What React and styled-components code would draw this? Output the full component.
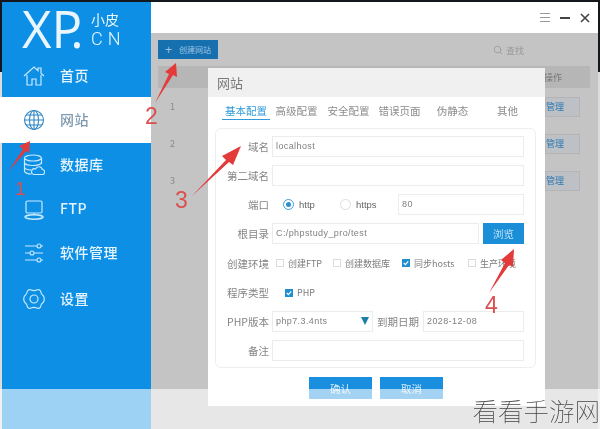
import React from 'react';
import styled, { createGlobalStyle } from 'styled-components';
import { Search } from 'lucide-react';

const GlobalStyle = createGlobalStyle`
  html, body {
    margin: 0;
    padding: 0;
    background: #ddd;
  }
  * {
    box-sizing: border-box;
  }
`;

const Page = styled.div`
  position: relative;
  width: 600px;
  height: 429px;
  overflow: hidden;
  padding: 2px 2px 0;
  background: linear-gradient(#14171c 72px, #dcdcdc 72px);
  font-family: "Noto Sans CJK SC", "Liberation Sans", sans-serif;
  font-size: 12px;
  color: #777;
`;

const Window = styled.div`
  display: flex;
  height: 427px;
  filter: blur(0.4px);
`;

const Sidebar = styled.aside`
  width: 149px;
  flex-shrink: 0;
  background: #0d8fe6;
  display: flex;
  flex-direction: column;
`;

const Logo = styled.div`
  height: 52px;
  display: flex;
  padding-left: 20px;
  color: #eaf6ff;
`;

const LogoMark = styled.div`
  font-family: "Open Sans", "Liberation Sans", sans-serif;
  font-size: 51px;
  line-height: 52px;
  width: 67px;
  white-space: nowrap;
`;

const LogoP = styled.span`
  letter-spacing: -12px;
`;

const LogoSide = styled.div`
  margin: 8px 0 0 2px;
  font-size: 14px;
  line-height: 18px;
  display: flex;
  flex-direction: column;
  gap: 2px;
`;

const LogoCn = styled.span`
  font-family: "Roboto", "Liberation Sans", sans-serif;
  font-size: 18px;
  font-weight: 300;
  letter-spacing: 5px;
`;

const MenuItem = styled.div`
  height: ${(p) => p.$h}px;
  flex-shrink: 0;
  display: flex;
  align-items: center;
  gap: 15px;
  color: ${(p) => (p.$active ? '#7f9bb0' : '#e6f4ff')};
  background: ${(p) => (p.$active ? '#fff' : 'transparent')};
  margin-left: ${(p) => (p.$active ? '-2px' : '0')};
  padding-left: ${(p) => (p.$active ? '23px' : '21px')};
  font-size: 14px;
  font-weight: 500;
  letter-spacing: 0.5px;
  svg {
    width: 22px;
    height: 22px;
    flex-shrink: 0;
    color: ${(p) => (p.$active ? '#2f86c4' : '#c9eaff')};
  }
`;

const MenuLabel = styled.span`
  padding-bottom: 2px;
`;

const Main = styled.main`
  flex: 1;
  display: flex;
  flex-direction: column;
  background: #c4c4c4;
`;

const TitleBar = styled.header`
  height: 31px;
  flex-shrink: 0;
  background: #fff;
  display: flex;
  align-items: center;
  justify-content: flex-end;
  gap: 10px;
  padding: 0 8px 0 0;
  color: #555;
`;

const MenuGlyph = styled.span`
  width: 10px;
  height: 9px;
  border-top: 1px solid #999;
  border-bottom: 1px solid #999;
  position: relative;
  &::after {
    content: '';
    position: absolute;
    left: 0;
    right: 0;
    top: 3px;
    height: 1px;
    background: #999;
  }
`;

const MinGlyph = styled.span`
  width: 10px;
  height: 2px;
  background: #444;
`;

const CloseGlyph = styled.svg`
  width: 10px;
  height: 10px;
`;

const Toolbar = styled.div`
  height: 33px;
  flex-shrink: 0;
  padding: 7px 8px 0 7px;
  display: flex;
  justify-content: space-between;
`;

const CreateButton = styled.div`
  width: 60px;
  height: 19px;
  background: #1670b0;
  color: #9cc4e0;
  font-size: 8px;
  display: flex;
  align-items: center;
  gap: 7px;
  padding-left: 7px;
`;

const PlusGlyph = styled.span`
  font-family: "Liberation Sans", sans-serif;
  font-size: 12px;
  line-height: 12px;
`;

const SearchBox = styled.div`
  display: flex;
  align-items: center;
  gap: 3px;
  height: 20px;
  margin-right: 66px;
  font-size: 9px;
  color: #9a9a9a;
`;

const Table = styled.div`
  margin: 0 8px 0 7px;
`;

const TableHead = styled.div`
  height: 22px;
  background: #b6b6b6;
  display: flex;
  justify-content: flex-end;
  align-items: center;
  padding-right: 28px;
  font-size: 9px;
  color: #777;
`;

const TableRow = styled.div`
  height: 37px;
  display: flex;
  justify-content: space-between;
  align-items: center;
  padding: 0 10px 0 12px;
  color: #8a8a8a;
  font-size: 9px;
`;

const ManageButton = styled.div`
  width: 35px;
  height: 20px;
  background: #bdc0c4;
  border: 1px solid #b4b4b4;
  color: #2b78b4;
  font-size: 9px;
  display: flex;
  align-items: center;
`;

const Dialog = styled.section`
  position: absolute;
  left: 208px;
  top: 68px;
  width: 337px;
  height: 338px;
  background: #fff;
  display: flex;
  flex-direction: column;
  filter: blur(0.4px);
`;

const DialogTitle = styled.div`
  height: 29px;
  flex-shrink: 0;
  background: #f0f0f0;
  padding-left: 9px;
  font-size: 13px;
  line-height: 30px;
  color: #7a7a7a;
`;

const Tabs = styled.div`
  height: 24px;
  margin: 4px 0 0 14px;
  display: flex;
`;

const Tab = styled.div`
  width: ${(p) => p.$w}px;
  height: 19px;
  padding-top: 3px;
  text-align: center;
  font-size: 10.5px;
  line-height: 14px;
  color: ${(p) => (p.$active ? '#2e9bd8' : '#8c8c8c')};
  border-bottom: ${(p) => (p.$active ? '1px solid #2e9bd8' : '0')};
`;

const Panel = styled.div`
  margin: 3px 9px 0 7px;
  height: 240px;
  border: 1px solid #eeeeee;
  border-radius: 6px;
  padding: 7px 11px 0 0;
  display: flex;
  flex-direction: column;
  gap: 8px;
`;

const FormRow = styled.div`
  display: flex;
  align-items: center;
  height: ${(p) => p.$h || 21}px;
`;

const Label = styled.div`
  width: 53px;
  flex-shrink: 0;
  margin-right: 3px;
  text-align: right;
  font-size: 10.5px;
  color: #858585;
  white-space: nowrap;
`;

const Field = styled.div`
  flex: ${(p) => (p.$w ? `0 0 ${p.$w}px` : 1)};
  min-width: 0;
  height: 21px;
  border: 1px solid #ececec;
  padding-left: 3px;
  font-family: "Liberation Sans", sans-serif;
  font-size: 9px;
  letter-spacing: 0.4px;
  line-height: 19px;
  color: #808080;
  position: relative;
  white-space: nowrap;
`;

const BrowseButton = styled.div`
  width: 41px;
  height: 21px;
  margin-left: 4px;
  flex-shrink: 0;
  background: #1a8fd8;
  color: #bfe2f8;
  font-size: 10.5px;
  text-align: center;
  line-height: 21px;
`;

const RadioItem = styled.div`
  display: flex;
  align-items: center;
  gap: 5px;
  width: ${(p) => p.$w}px;
  margin-left: ${(p) => p.$ml || 0}px;
  font-family: "Liberation Sans", sans-serif;
  font-size: 9.5px;
  color: #666;
`;

const RadioDot = styled.span`
  width: 11px;
  height: 11px;
  border-radius: 50%;
  border: 1px solid ${(p) => (p.$on ? '#3d9fd8' : '#dedede')};
  display: flex;
  align-items: center;
  justify-content: center;
  &::after {
    content: '';
    width: 5px;
    height: 5px;
    border-radius: 50%;
    background: ${(p) => (p.$on ? '#2a8fd0' : 'transparent')};
  }
`;

const CheckItem = styled.div`
  display: flex;
  align-items: center;
  gap: 4px;
  width: ${(p) => p.$w}px;
  margin-left: ${(p) => p.$ml || 0}px;
  font-size: 9px;
  color: #7c7c7c;
  white-space: nowrap;
`;

const CheckBox = styled.span`
  width: 8px;
  height: 8px;
  flex-shrink: 0;
  background: ${(p) => (p.$on ? '#1f8fd2' : '#fff')};
  border: 1px solid ${(p) => (p.$on ? '#1f8fd2' : '#dcdcdc')};
  display: flex;
  svg {
    width: 6px;
    height: 6px;
  }
`;

const Caret = styled.span`
  position: absolute;
  right: 3px;
  top: 5px;
  width: 0;
  height: 0;
  border-left: 4px solid transparent;
  border-right: 4px solid transparent;
  border-top: 8px solid #1a7fa8;
`;

const InlineLabel = styled.div`
  width: 50px;
  flex-shrink: 0;
  text-align: center;
  font-size: 10.5px;
  color: #858585;
  white-space: nowrap;
`;

const DialogActions = styled.div`
  display: flex;
  justify-content: center;
  gap: 8px;
  margin-top: 9px;
  padding-right: 1px;
`;

const ActionButton = styled.div`
  width: 63px;
  height: 22px;
  background: #1a8fe0;
  color: #d6ecfb;
  font-size: 10.5px;
  text-align: center;
  line-height: 23px;
`;

const FadeBand = styled.div`
  position: absolute;
  left: 0;
  right: 0;
  top: 389px;
  bottom: 0;
  background: rgba(255, 255, 255, 0.6);
`;

const Watermark = styled.div`
  position: absolute;
  right: 0;
  bottom: 1px;
  font-size: 25.5px;
  font-weight: 100;
  line-height: 36px;
  color: #444;
  white-space: nowrap;
`;

const Annotations = styled.svg`
  position: absolute;
  left: 0;
  top: 0;
  width: 600px;
  height: 429px;
  pointer-events: none;
`;

const Note = styled.span`
  position: absolute;
  left: ${(p) => p.$x}px;
  top: ${(p) => p.$y}px;
  font-family: "Liberation Sans", sans-serif;
  font-size: ${(p) => p.$size || 23}px;
  line-height: 24px;
  color: #d9504f;
`;

const HomeIcon = () => (
  <svg viewBox="0 0 22 22" fill="none" stroke="currentColor" strokeWidth="1.2">
    <path d="M1 11 11 2l4 3.6V3h3v5.3L21 11" />
    <path d="M4 10v10h5v-6h4v6h5V10" />
  </svg>
);

const GlobeIcon = () => (
  <svg viewBox="0 0 22 22" fill="none" stroke="currentColor" strokeWidth="1.1">
    <circle cx="11" cy="11" r="9.5" />
    <ellipse cx="11" cy="11" rx="4.5" ry="9.5" />
    <path d="M11 1.5v19M1.5 11h19M3 6h16M3 16h16" />
  </svg>
);

const DatabaseIcon = () => (
  <svg viewBox="0 0 22 22" fill="none" stroke="currentColor" strokeWidth="1.2">
    <ellipse cx="10" cy="4" rx="8.5" ry="3" />
    <path d="M1.5 4v13c0 1.6 3 3 7 3M18.5 4v6M1.5 8.5c0 1.6 3.5 3 8.5 3s8.5-1.4 8.5-3M1.5 13c0 1.6 3 2.8 7 3" />
    <path d="M10.5 20.5h8.5a2.5 2.5 0 0 0 .4-5 3.6 3.6 0 0 0-6.8-.6 2.9 2.9 0 0 0-2.1 5.6z" />
  </svg>
);

const FtpIcon = () => (
  <svg viewBox="0 0 22 22" fill="none" stroke="currentColor" strokeWidth="1.2">
    <rect x="3" y="3" width="16" height="12" rx="1.5" />
    <path d="M11 15v2" />
    <ellipse cx="11" cy="19" rx="9" ry="2.2" strokeWidth="1.6" />
  </svg>
);

const SlidersIcon = () => (
  <svg viewBox="0 0 22 22" fill="none" stroke="currentColor" strokeWidth="1.1">
    <path d="M2 4h12M18 4h2M2 11h5M11 11h9M2 18h12M18 18h2" />
    <circle cx="16" cy="4" r="2" />
    <circle cx="9" cy="11" r="2" />
    <circle cx="16" cy="18" r="2" />
  </svg>
);

const GearIcon = () => (
  <svg viewBox="0 0 22 22" fill="none" stroke="currentColor" strokeWidth="1.2">
    <path d="M4.5 3Q5.5 1 7.5 1.8Q11 3.4 14.5 1.8Q16.5 1 17.5 3Q18 6 20.5 8Q22 11 20.5 14Q18 16 17.5 19Q16.5 21 14.5 20.2Q11 18.6 7.5 20.2Q5.5 21 4.5 19Q4 16 1.5 14Q0 11 1.5 8Q4 6 4.5 3Z" />
    <circle cx="11" cy="11" r="4" />
  </svg>
);

const Check = () => (
  <svg viewBox="0 0 6 6" fill="none" stroke="#fff" strokeWidth="1.2">
    <path d="M.8 3 2.4 4.6 5.2 1.4" />
  </svg>
);

const menu = [
  { label: '首页', icon: <HomeIcon />, h: 43 },
  { label: '网站', icon: <GlobeIcon />, h: 46, active: true },
  { label: '数据库', icon: <DatabaseIcon />, h: 44 },
  { label: 'FTP', icon: <FtpIcon />, h: 43 },
  { label: '软件管理', icon: <SlidersIcon />, h: 45 },
  { label: '设置', icon: <GearIcon />, h: 47 },
];

const tabs = [
  ['基本配置', 48, true],
  ['高级配置', 53],
  ['安全配置', 51],
  ['错误页面', 51],
  ['伪静态', 55],
  ['其他', 55],
];

const arrows = [
  '8,172 23,149 19,146 30,141 29,153 26,151',
  '155,103 169,74 165,72 176,63 177,77 173,75',
  '192,196 226,160 222,156 241,146 233,165 229,162',
  '489,293 505,263 501,260 514,249 513,267 509,265',
];

const App = () => (
  <Page>
    <GlobalStyle />
    <Window>
      <Sidebar>
        <Logo>
          <LogoMark>X<LogoP>P</LogoP>.</LogoMark>
          <LogoSide>
            <span>小皮</span>
            <LogoCn>CN</LogoCn>
          </LogoSide>
        </Logo>
        {menu.map((item) => (
          <MenuItem key={item.label} $h={item.h} $active={item.active}>
            {item.icon}
            <MenuLabel>{item.label}</MenuLabel>
          </MenuItem>
        ))}
      </Sidebar>
      <Main>
        <TitleBar>
          <MenuGlyph />
          <MinGlyph />
          <CloseGlyph viewBox="0 0 10 10" stroke="#444" strokeWidth="1.6">
            <path d="M1 1l8 8M9 1l-8 8" />
          </CloseGlyph>
        </TitleBar>
        <Toolbar>
          <CreateButton>
            <PlusGlyph>+</PlusGlyph>创建网站
          </CreateButton>
          <SearchBox>
            <Search size={10} />查找
          </SearchBox>
        </Toolbar>
        <Table>
          <TableHead>操作</TableHead>
          {[1, 2, 3].map((n) => (
            <TableRow key={n}>
              {n}
              <ManageButton>管理</ManageButton>
            </TableRow>
          ))}
        </Table>
      </Main>
    </Window>
    <Dialog>
      <DialogTitle>网站</DialogTitle>
      <Tabs>
        {tabs.map(([name, w, active]) => (
          <Tab key={name} $w={w} $active={active}>
            {name}
          </Tab>
        ))}
      </Tabs>
      <Panel>
        <FormRow>
          <Label>域名</Label>
          <Field>localhost</Field>
        </FormRow>
        <FormRow>
          <Label>第二域名</Label>
          <Field />
        </FormRow>
        <FormRow>
          <Label>端口</Label>
          <RadioItem $w={57} $ml={11}>
            <RadioDot $on />http
          </RadioItem>
          <RadioItem $w={58}>
            <RadioDot />https
          </RadioItem>
          <Field>80</Field>
        </FormRow>
        <FormRow>
          <Label>根目录</Label>
          <Field>C:/phpstudy_pro/test</Field>
          <BrowseButton>浏览</BrowseButton>
        </FormRow>
        <FormRow $h={22}>
          <Label>创建环境</Label>
          <CheckItem $w={57} $ml={4}>
            <CheckBox />创建FTP
          </CheckItem>
          <CheckItem $w={69}>
            <CheckBox />创建数据库
          </CheckItem>
          <CheckItem $w={66}>
            <CheckBox $on><Check /></CheckBox>同步hosts
          </CheckItem>
          <CheckItem $w={50}>
            <CheckBox />生产环境
          </CheckItem>
        </FormRow>
        <FormRow>
          <Label>程序类型</Label>
          <CheckItem $w={60} $ml={13}>
            <CheckBox $on><Check /></CheckBox>PHP
          </CheckItem>
        </FormRow>
        <FormRow>
          <Label>PHP版本</Label>
          <Field $w={101}>
            php7.3.4nts
            <Caret />
          </Field>
          <InlineLabel>到期日期</InlineLabel>
          <Field>2028-12-08</Field>
        </FormRow>
        <FormRow>
          <Label>备注</Label>
          <Field />
        </FormRow>
      </Panel>
      <DialogActions>
        <ActionButton>确认</ActionButton>
        <ActionButton>取消</ActionButton>
      </DialogActions>
    </Dialog>
    <FadeBand />
    <Annotations viewBox="0 0 600 429">
      {arrows.map((points) => (
        <polygon key={points} points={points} fill="#e23b3a" />
      ))}
    </Annotations>
    <Note $x={15} $y={177} $size={19}>1</Note>
    <Note $x={145} $y={104}>2</Note>
    <Note $x={175} $y={188}>3</Note>
    <Note $x={485} $y={293}>4</Note>
    <Watermark>看看手游网</Watermark>
  </Page>
);

export default App;
